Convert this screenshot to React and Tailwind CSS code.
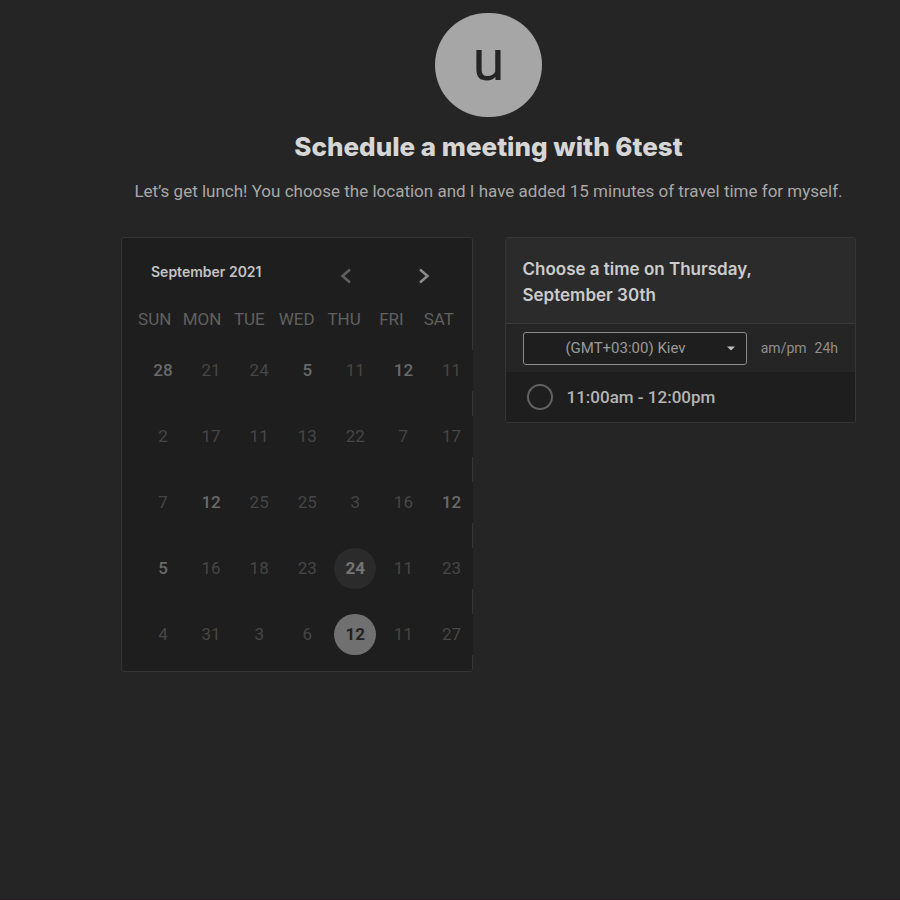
const weekdays = ["SUN", "MON", "TUE", "WED", "THU", "FRI", "SAT"];

// state: "open" days can be booked, "today" and "selected" are circled
const days = [
  { n: 28, state: "open" }, { n: 21 }, { n: 24 }, { n: 5, state: "open" }, { n: 11 }, { n: 12, state: "open" }, { n: 11 },
  { n: 2 }, { n: 17 }, { n: 11 }, { n: 13 }, { n: 22 }, { n: 7 }, { n: 17 },
  { n: 7 }, { n: 12, state: "open" }, { n: 25 }, { n: 25 }, { n: 3 }, { n: 16 }, { n: 12, state: "open" },
  { n: 5, state: "open" }, { n: 16 }, { n: 18 }, { n: 23 }, { n: 24, state: "today" }, { n: 11 }, { n: 23 },
  { n: 4 }, { n: 31 }, { n: 3 }, { n: 6 }, { n: 12, state: "selected" }, { n: 11 }, { n: 27 },
];

const dayStyles = {
  plain: "text-[#464646]",
  open: "font-medium text-[#6a6a6a]",
  today: "rounded-full bg-[#2b2b2b] font-bold text-[#757575]",
  selected: "rounded-full bg-[#707070] font-bold text-[#222222]",
};

function Chevron({ d }) {
  return (
    <svg className="size-6" viewBox="0 0 24 24" fill="none" stroke="currentColor" strokeWidth="2.5" aria-hidden="true">
      <path d={d} />
    </svg>
  );
}

function Calendar() {
  return (
    <section className="rounded-[3px] border border-[#353535] bg-[#1e1e1e] pb-4">
      <div className="flex items-start justify-between pt-6 pl-[29px] pr-9">
        <h2 className="font-['Inter',sans-serif] text-[14px] leading-5 font-semibold text-[#c4c4c4]">
          September 2021
        </h2>
        <div className="flex gap-[54px] pt-0.5">
          <button aria-label="Previous month" className="text-[#606060]">
            <Chevron d="M16 5.5L8.500 12l7.500 6.500" />
          </button>
          <button aria-label="Next month" className="text-[#8c8c8c]">
            <Chevron d="M8 5.5L15.500 12l-7.500 6.500" />
          </button>
        </div>
      </div>
      <div className="mt-[19px] grid grid-cols-7 px-[9px] text-center text-[17px] leading-6 text-[#606060]">
        {weekdays.map((d) => (
          <span key={d}>{d}</span>
        ))}
      </div>
      <div className="mt-[19px] -mr-px grid grid-cols-7 gap-x-[6px] gap-y-[25px] pl-5">
        {days.map((d, i) => (
          <div key={i} className="bg-[#1e1e1e]">
            <button className={`block h-[41px] w-full text-center text-[17px] ${dayStyles[d.state || "plain"]}`}>
              {d.n}
            </button>
          </div>
        ))}
      </div>
    </section>
  );
}

function TimePicker() {
  return (
    <section className="overflow-hidden rounded-[3px] border border-[#353535]">
      <h2 className="border-b border-[#3a3a3a] bg-[#2b2b2b] px-[17px] pt-[18px] pb-[15px] font-['Inter',sans-serif] text-[17px] leading-[26px] font-semibold text-[#cccccc]">
        Choose a time on Thursday,
        <br />
        September 30th
      </h2>
      <div className="flex items-center justify-between px-[17px] pt-2 pb-[7px] text-[#9a9a9a]">
        <div className="relative w-56">
          <select
            aria-label="Time zone"
            className="block h-[33px] w-full appearance-none rounded-[3px] border border-[#8c8c8c] bg-[#1e1e1e] pr-[18px] text-center text-[15px] [text-align-last:center]"
          >
            <option>(GMT+03:00) Kiev</option>
          </select>
          <svg className="pointer-events-none absolute top-[14px] right-3 h-[5px] w-2" viewBox="0 0 8 5" aria-hidden="true">
            <path d="M0 0.5h8L4 4.5z" fill="#bdbdbd" />
          </svg>
        </div>
        <div className="flex gap-2 text-[14px] text-[#8e8e8e]">
          <button>am/pm</button>
          <button>24h</button>
        </div>
      </div>
      <label className="flex items-center gap-[14px] bg-[#1e1e1e] py-3 pl-[21px] text-[17px] leading-[26px] font-medium text-[#b4b4b4]">
        <input type="radio" name="slot" className="size-[26px] appearance-none rounded-full border-2 border-[#626262]" />
        11:00am - 12:00pm
      </label>
    </section>
  );
}

export default function App() {
  return (
    <main className="min-h-screen border-b border-[#241a20] bg-[#252525] pt-[13px] pr-11 pl-[121px] font-['Roboto',sans-serif]">
      <header className="flex flex-col items-center text-center">
        <div className="flex h-[104px] w-[107px] items-center justify-center rounded-full bg-[#a6a6a6] pb-[10px] text-[58px] leading-none text-[#252525]">
          u
        </div>
        <h1 className="mt-[14px] font-['Inter',sans-serif] text-[26px] leading-8 font-extrabold text-[#d6d6d6]">
          Schedule a meeting with 6test
        </h1>
        <p className="mt-4 text-[17px] leading-6 whitespace-nowrap text-[#a8a8a8]">
          Let’s get lunch! You choose the location and I have added 15 minutes of travel time for myself.
        </p>
      </header>
      <div className="mt-[34px] grid grid-cols-2 items-start gap-8">
        <Calendar />
        <TimePicker />
      </div>
    </main>
  );
}
